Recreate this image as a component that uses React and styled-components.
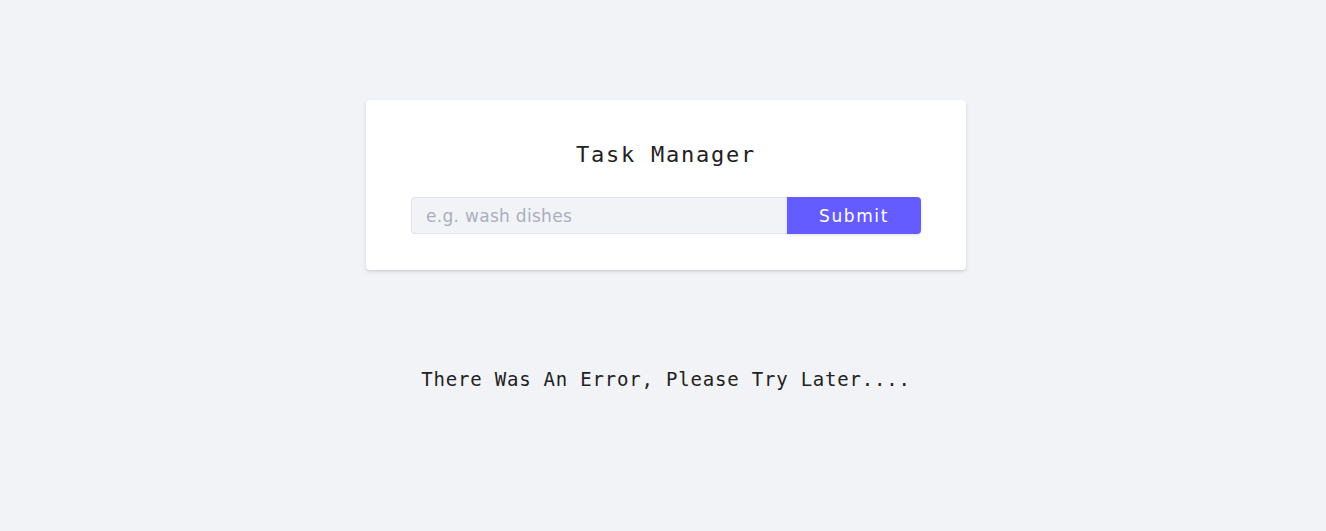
import React from 'react';
import styled, { createGlobalStyle } from 'styled-components';

const GlobalStyle = createGlobalStyle`
  body {
    margin: 0;
    background: #f2f3f7;
    color: #222;
    font-family: 'DejaVu Sans Mono', monospace;
  }
`;

const Page = styled.main`
  padding: 100px 0 0 6px;
  display: flex;
  flex-direction: column;
  align-items: center;
`;

const Card = styled.section`
  width: 600px;
  box-sizing: border-box;
  background: #fff;
  border-radius: 4px;
  box-shadow: 0 2px 4px rgba(0, 0, 0, 0.1), 0 1px 2px rgba(0, 0, 0, 0.06);
  padding: 40px 45px 36px;
`;

const Title = styled.h4`
  margin: 0 0 27px;
  text-align: center;
  font-family: 'DejaVu Sans Mono', monospace;
  font-weight: 400;
  font-size: 22px;
  line-height: 30px;
  letter-spacing: 1.75px;
  color: #222;
`;

const Form = styled.form`
  display: flex;
  height: 37px;
`;

const Input = styled.input`
  flex: 1;
  box-sizing: border-box;
  height: 100%;
  border: 1px solid #e1e3ea;
  border-right: none;
  border-radius: 4px 0 0 4px;
  background: #f2f3f7;
  padding: 0 14px;
  font-family: 'DejaVu Sans', sans-serif;
  font-size: 17px;
  letter-spacing: 0.3px;
  color: #333;
  outline: none;

  &::placeholder {
    color: #a9afbd;
  }
`;

const Button = styled.button`
  width: 134px;
  height: 100%;
  border: none;
  border-radius: 0 4px 4px 0;
  background: #645cff;
  color: #fff;
  font-family: 'DejaVu Sans', sans-serif;
  font-size: 17px;
  letter-spacing: 1.6px;
  cursor: pointer;
  box-shadow: 0 1px 3px rgba(0, 0, 0, 0.12);
`;

const ErrorText = styled.p`
  margin: 94px 0 0;
  font-family: 'DejaVu Sans Mono', monospace;
  font-size: 19px;
  line-height: 30px;
  letter-spacing: 0.8px;
  color: #222;
`;

const App = () => {
  return (
    <>
      <GlobalStyle />
      <Page>
        <Card>
          <Title>Task Manager</Title>
          <Form onSubmit={(e) => e.preventDefault()}>
            <Input type="text" placeholder="e.g. wash dishes" />
            <Button type="submit">Submit</Button>
          </Form>
        </Card>
        <ErrorText>There Was An Error, Please Try Later....</ErrorText>
      </Page>
    </>
  );
};

export default App;
